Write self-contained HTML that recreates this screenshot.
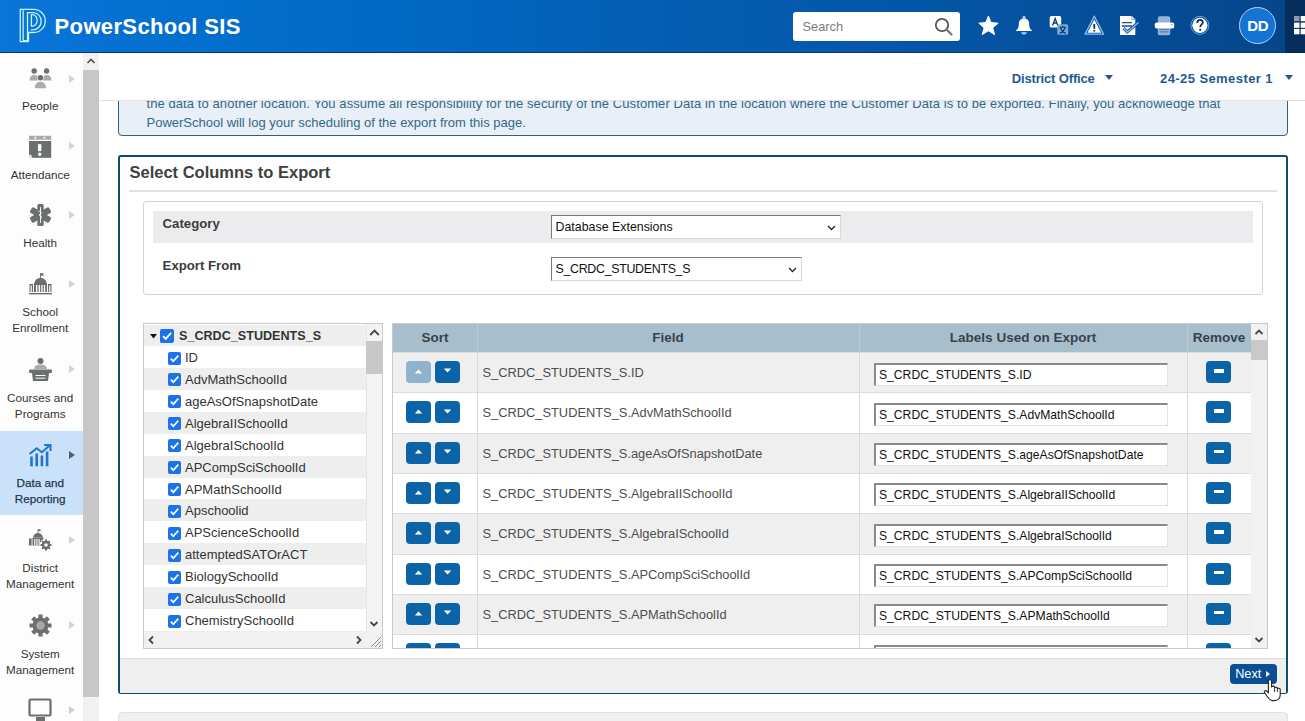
<!DOCTYPE html>
<html><head><meta charset="utf-8">
<style>
*{box-sizing:border-box;margin:0;padding:0}
html,body{width:1305px;height:721px;overflow:hidden;background:#fff;font-family:"Liberation Sans",sans-serif;color:#333}
.abs{position:absolute}
#hdr{left:0;top:0;width:1305px;height:53px;background:linear-gradient(90deg,#0a74d9 0%,#026cc8 22%,#0069c3 30%,#045db2 52%,#0553a2 76%,#054b93 90%,#05468b 98.5%);border-bottom:1px solid #053a75}
#apps{left:1285px;top:0;width:20px;height:53px;background:#062e5c;border-bottom:1px solid #04254a}
#title{left:54.6px;top:13.8px;font-size:22px;font-weight:bold;color:#fff;letter-spacing:0.35px}
#search{left:793px;top:11.5px;width:167px;height:29.5px;background:#fff;border-radius:3px}
#search span{position:absolute;left:9.5px;top:7.8px;font-size:12.8px;color:#7a7a7a}
#side{left:0;top:53px;width:83px;height:668px;background:#fdfdfd}
#sbtrack{left:83px;top:53px;width:16px;height:668px;background:#f1f1f1}
#sbthumb{left:83px;top:70px;width:16px;height:627px;background:#c7c7c7}
.item{position:absolute;left:-1.3px;width:83px;text-align:center;font-size:11.7px;color:#333;line-height:16.3px}
.arr{position:absolute;left:69px;width:0;height:0;border-top:4px solid transparent;border-bottom:4px solid transparent;border-left:6px solid #d0d0d0}
#sub{left:99px;top:53px;width:1206px;height:48px;background:#fff;border-bottom:1px solid #e2e2e2;z-index:3}
.dd{position:absolute;font-weight:bold;color:#1d5a94;top:18px;font-size:13px}
.tri{position:absolute;width:0;height:0;border-left:4.7px solid transparent;border-right:4.7px solid transparent;border-top:5.7px solid #1d5a94}
#notice{left:118px;top:60px;width:1170px;height:76px;background:#e8eff7;border:1px solid #35607a;border-radius:4px}
#notice p{position:absolute;left:27.5px;top:33px;font-size:13px;line-height:20px;color:#33688c;width:1120px}
#box{left:118px;top:155px;width:1170px;height:539px;border:2px solid #0f4d6e;border-radius:3px;background:#fff}
#boxtitle{left:129.5px;top:163px;font-size:16.5px;font-weight:bold;color:#404040}
#rule{left:129px;top:190px;width:1148px;height:2px;background:#e2e2e2}
#filt{left:143px;top:201px;width:1120px;height:94px;border:1px solid #d4d4d4;border-radius:3px}
#catrow{left:153px;top:211px;width:1100px;height:32px;background:#ececee}
.lbl{position:absolute;font-size:13.2px;font-weight:bold;color:#3c3c3c}
.sel{position:absolute;height:24px;background:#fff;border:1px solid #a0a0a0;border-top-color:#7a7a7a;border-left-color:#7a7a7a;border-right-color:#d8d8d8;border-bottom-color:#d8d8d8;font-size:12.4px;color:#111}
.sel span{position:absolute;left:3.5px;top:4px}
.sel svg{position:absolute;right:4px;top:9px}
#tree{left:143px;top:323px;width:240px;height:326px;border:1px solid #c9c9c9;background:#fff;overflow:hidden}
.tr{position:absolute;left:0;width:222px;font-size:13px;color:#333;white-space:nowrap}
.tr.g{background:#eeeeee}
.tr span{position:absolute;top:4px}
.cb{position:absolute;width:13px;height:13px;background:#1a73e8;border-radius:2px}
.cb svg{position:absolute;left:0;top:0}
#tbl{left:392px;top:323px;width:876px;height:326px;border:1px solid #c9c9c9;background:#fff;overflow:hidden}
.th{position:absolute;top:0;height:28px;background:#a7bfcd;font-size:13.5px;font-weight:bold;color:#36434e;text-align:center;line-height:28px}
.row{position:absolute;left:0;width:858px;border-top:1px solid #dcdcdc}
.row.g{background:#efefef}
.vl{position:absolute;top:0;width:1px;background:#d8d8d8}
.btn{position:absolute;width:25px;height:22px;border-radius:4px;background:#0b63a8}
.btn.dis{background:#8fb2cd}
.ftxt{position:absolute;left:89.5px;font-size:12.85px;color:#4d4d4d}
.inp{position:absolute;left:481px;width:294px;height:23px;background:#fff;border:1px solid #e2e2e2;border-top:2px solid #8a8a8a;border-left:2px solid #8a8a8a;font-size:12.15px;color:#111}
.inp span{position:absolute;left:3px;top:3px}
#foot{left:120px;top:658px;width:1166px;height:35px;background:#efefef;border-top:1px solid #dcdcdc}
#next{left:1230.2px;top:664px;width:46.4px;height:20.3px;background:#0a4f95;border-radius:4px;color:#fff;font-size:12.7px}
#bottombox{left:118px;top:712px;width:1170px;height:20px;background:#f0f0f0;border:1px solid #e0e0e0;border-radius:4px}

</style></head><body>
<div id="hdr" class="abs"></div><div id="apps" class="abs"></div>
<svg class="abs" style="left:15px;top:5px" width="35" height="42" viewBox="0 0 601 721">
<g fill="none" stroke="#c4f6ff" stroke-width="22">
<path d="M90,75 H320 A200,198 0 0 1 320,472 H232 V628 H90 Z"/>
<path d="M140,92 V612 H215 V130 H310 A140,148 0 0 1 310,426 H270"/>
<path d="M282,165 H300 A80,98 0 0 1 300,361 H282 Z"/>
</g></svg>
<div id="title" class="abs">PowerSchool SIS</div>
<div id="search" class="abs"><span>Search</span>
<svg style="position:absolute;left:141px;top:5.5px" width="20" height="20" viewBox="0 0 20 20"><circle cx="8" cy="8" r="6.2" fill="none" stroke="#555" stroke-width="1.8"/><path d="M12.4 12.4 L17.5 17.5" stroke="#777" stroke-width="2.2" stroke-linecap="round"/></svg></div>
<svg class="abs" style="left:978px;top:15px" width="21" height="21" viewBox="0 0 21 21"><path d="M10.4 1 L13 7.6 L20.2 8.2 L14.7 12.8 L16.6 19.6 L10.4 15.8 L4.2 19.6 L6.1 12.8 L0.8 8.2 L7.8 7.6 Z" fill="#fff" stroke="#fff" stroke-width="1" stroke-linejoin="round"/></svg>
<svg class="abs" style="left:1015px;top:15px" width="18" height="21" viewBox="0 0 18 21"><circle cx="9" cy="2.2" r="1.5" fill="#a9d2f5"/><path d="M9 3.5 C5.2 3.5 3.8 6 3.8 9.5 C3.8 12.5 3 14 0.6 16 L17.4 16 C15 14 14.2 12.5 14.2 9.5 C14.2 6 12.8 3.5 9 3.5 Z" fill="#fff"/><path d="M6.3 17 A2.7 2.7 0 0 0 11.7 17 Z" fill="#8fc0ea"/></svg>
<svg class="abs" style="left:1049px;top:15px" width="21" height="21" viewBox="0 0 21 21"><rect x="0.7" y="1" width="11.5" height="11.5" rx="1.6" fill="#fff"/><path d="M3.5 10.5 L6.2 3.5 L8.8 10.5 M4.5 8 H8" stroke="#0a3c70" stroke-width="1.3" fill="none"/><rect x="8.2" y="9.2" width="11" height="10.6" rx="1.6" fill="#78a8d8"/><path d="M10.5 12.2 H17 M13.7 10.8 V12.2 M11.2 12.5 C12.5 16 14.5 17.5 17 18.5 M16.2 12.5 C15 16 13 17.5 10.6 18.5" stroke="#0a3c70" stroke-width="1.1" fill="none"/></svg>
<svg class="abs" style="left:1084px;top:15px" width="21" height="21" viewBox="0 0 21 21"><path d="M10.3 1.2 L19.6 19.2 L1 19.2 Z" fill="none" stroke="#8ec1ee" stroke-width="1.3" stroke-linejoin="round"/><path d="M10.3 4.5 L17.2 17.8 L3.4 17.8 Z" fill="#fff"/><path d="M10.3 9 V13.8" stroke="#0b2e55" stroke-width="1.8"/><circle cx="10.3" cy="15.8" r="0.95" fill="#0b2e55"/></svg>
<svg class="abs" style="left:1119px;top:15px" width="21" height="21" viewBox="0 0 21 21"><path d="M1 1 H12.8 L16.3 4.5 V20 H1 Z" fill="#fff"/><path d="M12.8 1 V4.5 H16.3" fill="none" stroke="#6aa4dc" stroke-width="0.8"/><path d="M3 7.6 H13 M3 11 H13" stroke="#2a4e78" stroke-width="1.4"/><path d="M4.6 13.2 L8.2 17 L19.5 7.4" fill="none" stroke="#0a4e94" stroke-width="3"/><path d="M4.6 13.2 L8.2 17 L19.5 7.4" fill="none" stroke="#8ebde8" stroke-width="1.3"/></svg>
<svg class="abs" style="left:1154px;top:15px" width="21" height="21" viewBox="0 0 21 21"><rect x="3.8" y="1.3" width="12.4" height="19" rx="1.8" fill="#93b2d6"/><rect x="0.8" y="7.4" width="19.4" height="6.2" rx="1.8" fill="#fff"/><circle cx="17.8" cy="9.6" r="0.6" fill="#3a5c85"/><path d="M5.2 14.4 H14.8 M5.2 16.8 H14.8" stroke="#5a7eaa" stroke-width="1.2"/></svg>
<svg class="abs" style="left:1190px;top:15px" width="21" height="21" viewBox="0 0 21 21"><circle cx="9.9" cy="10.3" r="9" fill="none" stroke="#6fa6de" stroke-width="1"/><circle cx="9.9" cy="10.3" r="7.6" fill="#fff"/><path d="M7.3 8 C7.3 5.8 8.6 4.8 10 4.8 C11.6 4.8 12.8 5.8 12.8 7.4 C12.8 9.4 10.2 9.6 10.2 12.2" fill="none" stroke="#0b2e55" stroke-width="1.8"/><circle cx="10.2" cy="14.8" r="1.1" fill="#0b2e55"/></svg>
<div class="abs" style="left:1239px;top:7px;width:37px;height:37px;border-radius:50%;background:#1474d6;border:1.7px solid #b5d4f2"></div>
<div class="abs" style="left:1239px;top:16.7px;width:37.5px;text-align:center;font-size:15px;font-weight:bold;color:#fff;letter-spacing:-0.3px">DD</div>
<svg class="abs" style="left:1294.3px;top:16.2px" width="11" height="19" viewBox="0 0 11 19"><g fill="#fff"><rect x="0" y="0" width="5.5" height="5.2" fill="#8e98b8"/><rect x="6.7" y="0" width="5.5" height="5.2"/><rect x="0" y="6.6" width="5.5" height="5.2"/><rect x="6.7" y="6.6" width="5.5" height="5.2"/><rect x="0" y="12.9" width="5.5" height="5.4"/><rect x="6.7" y="12.9" width="5.5" height="5.4"/></g></svg>
<div id="side" class="abs"></div><div id="sbtrack" class="abs"></div><div id="sbthumb" class="abs"></div>
<div class="abs" style="left:83px;top:53px;width:16px;height:17px;background:#f1f1f1"></div>
<svg class="abs" style="left:86px;top:57px" width="10" height="8" viewBox="0 0 10 8"><path d="M1.5 6 L5 2.5 L8.5 6" fill="none" stroke="#505050" stroke-width="1.6"/></svg>
<div class="abs" style="left:0;top:430.5px;width:83px;height:84.5px;background:#cae2f9"></div>
<svg class="abs" style="left:29px;top:68px" width="23" height="23" viewBox="0 0 23 23"><circle cx="5.2" cy="3" r="2.7" fill="#6c6f6f"/><circle cx="17.6" cy="3" r="2.7" fill="#6c6f6f"/><path d="M0.5 12.5 C0.8 8.5 2.5 7 5.2 7 C7 7 8.5 7.8 9.2 9.5 L9.2 12.5 Z M22.5 12.5 C22.2 8.5 20.5 7 17.6 7 C16 7 14.5 7.8 13.8 9.5 L13.8 12.5 Z" fill="#ababab"/><circle cx="11.4" cy="9.8" r="3.2" fill="#fdfdfd"/><circle cx="11.4" cy="9.8" r="2.7" fill="#6c6f6f"/><path d="M5.8 20.3 C6 16 8 13.8 11.4 13.8 C14.8 13.8 16.8 16 17 20.3 Z" fill="#ababab"/></svg>
<div class="item" style="top:98.3px;color:#333">People</div>
<div class="arr" style="top:75px;border-left-color:#d4d4d4"></div>
<svg class="abs" style="left:29px;top:135px" width="23" height="23" viewBox="0 0 23 23"><rect x="0" y="0.8" width="22.2" height="3.9" fill="#a9a9a9"/><circle cx="6.3" cy="2.75" r="1" fill="#fdfdfd"/><circle cx="15.4" cy="2.75" r="1" fill="#fdfdfd"/><rect x="0" y="6" width="22.2" height="16.8" fill="#6c6f6f"/><rect x="9" y="9.2" width="3.4" height="7" fill="#fff"/><circle cx="10.7" cy="19.2" r="1.7" fill="#fff"/><path d="M0.5 19.5 C2 19.5 2.8 20.5 2.8 22.8 L0 22.8Z" fill="#fdfdfd"/></svg>
<div class="item" style="top:166.8px;color:#333">Attendance</div>
<div class="arr" style="top:142px;border-left-color:#d4d4d4"></div>
<svg class="abs" style="left:29px;top:204px" width="23" height="23" viewBox="0 0 23 23"><g fill="#6c6f6f"><rect x="8.3" y="0" width="6.4" height="22" rx="1.5"/><rect x="8.3" y="0" width="6.4" height="22" rx="1.5" transform="rotate(60 11.5 11)"/><rect x="8.3" y="0" width="6.4" height="22" rx="1.5" transform="rotate(-60 11.5 11)"/></g><path d="M11.5 3 V19 M9.5 7 C13 8 13 10 10 11 C13 12 13 14 11 15" stroke="#fdfdfd" stroke-width="0.9" fill="none"/></svg>
<div class="item" style="top:235.4px;color:#333">Health</div>
<div class="arr" style="top:211px;border-left-color:#d4d4d4"></div>
<svg class="abs" style="left:29px;top:273px" width="23" height="23" viewBox="0 0 23 23"><g fill="#6c6f6f"><path d="M11.5 0 V5" stroke="#6c6f6f" stroke-width="0.9"/><path d="M11.8 0.3 H15 L14 1.5 L15 2.8 H11.8Z"/><path d="M5.5 10 C6 6.5 8.5 5 11.5 5 C14.5 5 17 6.5 17.5 10 Z"/><rect x="5" y="10" width="13" height="9"/><rect x="0.5" y="11" width="3.5" height="8"/><rect x="19" y="11" width="3.5" height="8"/><rect x="0" y="20" width="23" height="1.4"/></g><g fill="#fdfdfd"><rect x="7" y="12" width="1.4" height="7"/><rect x="9.6" y="12" width="1.4" height="7"/><rect x="12.2" y="12" width="1.4" height="7"/><rect x="14.8" y="12" width="1.4" height="7"/><rect x="1.6" y="12.5" width="1.2" height="6.5"/><rect x="20.2" y="12.5" width="1.2" height="6.5"/></g></svg>
<div class="item" style="top:304.1px;color:#333">School<br>Enrollment</div>
<div class="arr" style="top:280px;border-left-color:#d4d4d4"></div>
<svg class="abs" style="left:29px;top:358px" width="23" height="23" viewBox="0 0 23 23"><circle cx="11.5" cy="3" r="3" fill="#6c6f6f"/><path d="M5 11 C5.5 7.5 8 6.5 11.5 6.5 C15 6.5 17.5 7.5 18 11 Z" fill="#ababab"/><rect x="0" y="11.5" width="23" height="3.4" rx="0.8" fill="#6c6f6f"/><path d="M3 14.9 H20 L19 23 H4 Z" fill="#6c6f6f"/><path d="M6.5 17.5 H16.5 M6.5 20.2 H16.5" stroke="#fdfdfd" stroke-width="1"/></svg>
<div class="item" style="top:389.6px;color:#333">Courses and<br>Programs</div>
<div class="arr" style="top:365px;border-left-color:#d4d4d4"></div>
<svg class="abs" style="left:29px;top:444px" width="23" height="23" viewBox="0 0 23 23"><g fill="#1f75cc"><rect x="1.2" y="12.5" width="2.6" height="9.8"/><rect x="6.4" y="9.5" width="2.6" height="12.8"/><rect x="11.6" y="11.5" width="2.6" height="10.8"/><rect x="16.8" y="7.5" width="2.6" height="14.8"/></g><path d="M0.6 10 L7.7 4.2 L12.9 8.2 L20.6 1.6" fill="none" stroke="#1f75cc" stroke-width="2"/><path d="M15.2 0.9 H21.5 V7" fill="none" stroke="#1f75cc" stroke-width="2"/></svg>
<div class="item" style="top:474.6px;color:#22384f;-webkit-text-stroke:0.25px #22384f">Data and<br>Reporting</div>
<div class="arr" style="top:451px;border-left-color:#4f5f70"></div>
<svg class="abs" style="left:29px;top:529px" width="23" height="23" viewBox="0 0 23 23"><g fill="#6c6f6f"><path d="M9 0 V4" stroke="#6c6f6f" stroke-width="0.8"/><path d="M9.2 0.2 H12 L11.2 1.2 L12 2.3 H9.2Z"/><path d="M4 8.5 C4.5 5.5 6.5 4 9 4 C11.5 4 13.5 5.5 14 8.5 Z"/><rect x="3.5" y="8.5" width="11" height="8"/><rect x="0" y="9.5" width="2.6" height="7"/></g><g fill="#fdfdfd"><rect x="5.2" y="10" width="1.1" height="6.5"/><rect x="7.4" y="10" width="1.1" height="6.5"/><rect x="9.6" y="10" width="1.1" height="6.5"/></g><circle cx="17" cy="16" r="6.2" fill="#fdfdfd"/><g fill="#6c6f6f"><circle cx="17" cy="16" r="4.2"/><g stroke="#6c6f6f" stroke-width="2"><path d="M17 10.5 V21.5 M11.5 16 H22.5 M13.1 12.1 L20.9 19.9 M20.9 12.1 L13.1 19.9"/></g></g><circle cx="17" cy="16" r="1.8" fill="#fdfdfd"/></svg>
<div class="item" style="top:560px;color:#333">District<br>Management</div>
<div class="arr" style="top:536px;border-left-color:#d4d4d4"></div>
<svg class="abs" style="left:29px;top:614px" width="23" height="23" viewBox="0 0 23 23"><g fill="#6c6f6f" stroke="#6c6f6f"><circle cx="11.5" cy="11.5" r="8" stroke="none"/><path d="M11.5 0.5 V22.5 M0.5 11.5 H22.5 M3.7 3.7 L19.3 19.3 M19.3 3.7 L3.7 19.3" stroke-width="4.2"/></g><circle cx="11.5" cy="11.5" r="4.2" fill="#a9a9a9"/></svg>
<div class="item" style="top:646.2px;color:#333">System<br>Management</div>
<div class="arr" style="top:621px;border-left-color:#d4d4d4"></div>
<svg class="abs" style="left:28px;top:698px" width="25" height="23" viewBox="0 0 25 23"><rect x="1.5" y="1.5" width="21" height="16" rx="1" fill="none" stroke="#6c6f6f" stroke-width="2.2"/><rect x="8" y="19" width="9" height="4" fill="#6c6f6f"/></svg>
<div class="arr" style="top:706px"></div>
<div id="sub" class="abs">
  <div class="dd" style="left:912.7px;letter-spacing:-0.15px">District Office</div>
  <div class="tri" style="left:1006.4px;top:22.2px"></div>
  <div class="dd" style="left:1061px;letter-spacing:0.42px">24-25 Semester 1</div>
  <div class="tri" style="left:1185.6px;top:22.2px"></div>
</div>
<div id="notice" class="abs"><p style="letter-spacing:0.08px;white-space:nowrap">the data to another location. You assume all responsibility for the security of the Customer Data in the location where the Customer Data is to be exported. Finally, you acknowledge that</p><p style="top:52px">PowerSchool will log your scheduling of the export from this page.</p></div>
<div id="box" class="abs"></div><div id="boxtitle" class="abs">Select Columns to Export</div><div id="rule" class="abs"></div>
<div id="filt" class="abs"></div><div id="catrow" class="abs"></div>
<div class="lbl abs" style="left:162.6px;top:216px">Category</div><div class="lbl abs" style="left:162.6px;top:258px">Export From</div>
<div class="sel" style="left:551px;top:215px;width:290px"><span>Database Extensions</span><svg width="9" height="6" viewBox="0 0 9 6"><path d="M1 1 L4.5 4.5 L8 1" fill="none" stroke="#222" stroke-width="1.3"/></svg></div>
<div class="sel" style="left:551px;top:257px;width:251px"><span style="letter-spacing:-0.3px">S_CRDC_STUDENTS_S</span><svg width="9" height="6" viewBox="0 0 9 6"><path d="M1 1 L4.5 4.5 L8 1" fill="none" stroke="#222" stroke-width="1.3"/></svg></div>
<div id="tree" class="abs"><div class="tr g" style="top:1px;height:20.5px"><svg style="position:absolute;left:6px;top:9px" width="7" height="5" viewBox="0 0 7 5"><path d="M0 0 H7 L3.5 4.5Z" fill="#111"/></svg><div class="cb" style="left:16px;top:3.8px;width:14px;height:14px"><svg width="14" height="14" viewBox="0 0 13 13"><path d="M2.8 6.6 L5.3 9.2 L10.3 3.6" fill="none" stroke="#fff" stroke-width="1.7"/></svg></div><span style="left:35px;top:3.5px;font-weight:bold;font-size:12.6px;color:#333">S_CRDC_STUDENTS_S</span></div><div class="tr" style="top:22.00px;height:21.92px"><div class="cb" style="left:24px;top:5.5px"><svg width="13" height="13" viewBox="0 0 13 13"><path d="M2.8 6.6 L5.3 9.2 L10.3 3.6" fill="none" stroke="#fff" stroke-width="1.7"/></svg></div><span style="left:41px">ID</span></div><div class="tr g" style="top:43.92px;height:21.92px"><div class="cb" style="left:24px;top:5.5px"><svg width="13" height="13" viewBox="0 0 13 13"><path d="M2.8 6.6 L5.3 9.2 L10.3 3.6" fill="none" stroke="#fff" stroke-width="1.7"/></svg></div><span style="left:41px">AdvMathSchoolId</span></div><div class="tr" style="top:65.84px;height:21.92px"><div class="cb" style="left:24px;top:5.5px"><svg width="13" height="13" viewBox="0 0 13 13"><path d="M2.8 6.6 L5.3 9.2 L10.3 3.6" fill="none" stroke="#fff" stroke-width="1.7"/></svg></div><span style="left:41px">ageAsOfSnapshotDate</span></div><div class="tr g" style="top:87.76px;height:21.92px"><div class="cb" style="left:24px;top:5.5px"><svg width="13" height="13" viewBox="0 0 13 13"><path d="M2.8 6.6 L5.3 9.2 L10.3 3.6" fill="none" stroke="#fff" stroke-width="1.7"/></svg></div><span style="left:41px">AlgebraIISchoolId</span></div><div class="tr" style="top:109.68px;height:21.92px"><div class="cb" style="left:24px;top:5.5px"><svg width="13" height="13" viewBox="0 0 13 13"><path d="M2.8 6.6 L5.3 9.2 L10.3 3.6" fill="none" stroke="#fff" stroke-width="1.7"/></svg></div><span style="left:41px">AlgebraISchoolId</span></div><div class="tr g" style="top:131.60px;height:21.92px"><div class="cb" style="left:24px;top:5.5px"><svg width="13" height="13" viewBox="0 0 13 13"><path d="M2.8 6.6 L5.3 9.2 L10.3 3.6" fill="none" stroke="#fff" stroke-width="1.7"/></svg></div><span style="left:41px">APCompSciSchoolId</span></div><div class="tr" style="top:153.52px;height:21.92px"><div class="cb" style="left:24px;top:5.5px"><svg width="13" height="13" viewBox="0 0 13 13"><path d="M2.8 6.6 L5.3 9.2 L10.3 3.6" fill="none" stroke="#fff" stroke-width="1.7"/></svg></div><span style="left:41px">APMathSchoolId</span></div><div class="tr g" style="top:175.44px;height:21.92px"><div class="cb" style="left:24px;top:5.5px"><svg width="13" height="13" viewBox="0 0 13 13"><path d="M2.8 6.6 L5.3 9.2 L10.3 3.6" fill="none" stroke="#fff" stroke-width="1.7"/></svg></div><span style="left:41px">Apschoolid</span></div><div class="tr" style="top:197.36px;height:21.92px"><div class="cb" style="left:24px;top:5.5px"><svg width="13" height="13" viewBox="0 0 13 13"><path d="M2.8 6.6 L5.3 9.2 L10.3 3.6" fill="none" stroke="#fff" stroke-width="1.7"/></svg></div><span style="left:41px">APScienceSchoolId</span></div><div class="tr g" style="top:219.28px;height:21.92px"><div class="cb" style="left:24px;top:5.5px"><svg width="13" height="13" viewBox="0 0 13 13"><path d="M2.8 6.6 L5.3 9.2 L10.3 3.6" fill="none" stroke="#fff" stroke-width="1.7"/></svg></div><span style="left:41px">attemptedSATOrACT</span></div><div class="tr" style="top:241.20px;height:21.92px"><div class="cb" style="left:24px;top:5.5px"><svg width="13" height="13" viewBox="0 0 13 13"><path d="M2.8 6.6 L5.3 9.2 L10.3 3.6" fill="none" stroke="#fff" stroke-width="1.7"/></svg></div><span style="left:41px">BiologySchoolId</span></div><div class="tr g" style="top:263.12px;height:21.92px"><div class="cb" style="left:24px;top:5.5px"><svg width="13" height="13" viewBox="0 0 13 13"><path d="M2.8 6.6 L5.3 9.2 L10.3 3.6" fill="none" stroke="#fff" stroke-width="1.7"/></svg></div><span style="left:41px">CalculusSchoolId</span></div><div class="tr" style="top:285.04px;height:21.92px"><div class="cb" style="left:24px;top:5.5px"><svg width="13" height="13" viewBox="0 0 13 13"><path d="M2.8 6.6 L5.3 9.2 L10.3 3.6" fill="none" stroke="#fff" stroke-width="1.7"/></svg></div><span style="left:41px">ChemistrySchoolId</span></div><div class="tr g" style="top:306.96px;height:21.92px"><div class="cb" style="left:24px;top:5.5px"><svg width="13" height="13" viewBox="0 0 13 13"><path d="M2.8 6.6 L5.3 9.2 L10.3 3.6" fill="none" stroke="#fff" stroke-width="1.7"/></svg></div><span style="left:41px">ChemSchoolId</span></div><div style="position:absolute;left:222px;top:0;width:17px;height:308px;background:#f3f3f3;border-left:1px solid #e4e4e4"></div><div style="position:absolute;left:222px;top:16.5px;width:17px;height:33.5px;background:#c8c8c8"></div><svg style="position:absolute;left:225px;top:3.5px" width="11" height="9" viewBox="0 0 11 9"><path d="M1.2 7 L5.5 2.6 L9.8 7" fill="none" stroke="#454545" stroke-width="1.8"/></svg><svg style="position:absolute;left:225px;top:296px" width="10" height="8" viewBox="0 0 10 8"><path d="M1.5 2 L5 5.5 L8.5 2" fill="none" stroke="#454545" stroke-width="1.8"/></svg><div style="position:absolute;left:0;top:308px;width:239px;height:17px;background:#f1f1f1"></div><svg style="position:absolute;left:3px;top:311px" width="8" height="10" viewBox="0 0 8 10"><path d="M6 1.5 L2.5 5 L6 8.5" fill="none" stroke="#454545" stroke-width="1.8"/></svg><svg style="position:absolute;left:211px;top:311px" width="8" height="10" viewBox="0 0 8 10"><path d="M2 1.5 L5.5 5 L2 8.5" fill="none" stroke="#454545" stroke-width="1.8"/></svg><svg style="position:absolute;left:225px;top:311px" width="13" height="13" viewBox="0 0 13 13"><path d="M12 2 L2 12 M12 6 L6 12 M12 10 L10 12" stroke="#888" stroke-width="1"/></svg></div>
<div id="tbl" class="abs"><div class="th" style="left:0;width:84px">Sort</div><div class="th" style="left:84px;width:382px">Field</div><div class="th" style="left:466px;width:328px">Labels Used on Export</div><div class="th" style="left:794px;width:64px">Remove</div><div class="vl" style="left:84px;height:28px;background:#b8ccd8"></div><div class="vl" style="left:466px;height:28px;background:#b8ccd8"></div><div class="vl" style="left:794px;height:28px;background:#b8ccd8"></div><div class="row g" style="top:28.00px;height:40.33px"><div class="btn dis" style="left:13px;top:8px"><svg style="position:absolute;left:8px;top:7.6px" width="9" height="5" viewBox="0 0 9 5"><path d="M0.8 4.4 L4.5 0.4 L8.2 4.4Z" fill="#fff"/></svg></div><div class="btn" style="left:42.4px;top:8px"><svg style="position:absolute;left:8px;top:7.2px" width="9" height="5" viewBox="0 0 9 5"><path d="M0.8 0.6 L4.5 4.6 L8.2 0.6Z" fill="#fff"/></svg></div><div class="ftxt" style="top:12px">S_CRDC_STUDENTS_S.ID</div><div class="inp" style="top:9.5px"><span>S_CRDC_STUDENTS_S.ID</span></div><div class="btn" style="left:813px;top:8px"><div style="position:absolute;left:8px;top:8px;width:9.5px;height:3.5px;background:#fff"></div></div></div><div class="row" style="top:68.33px;height:40.33px"><div class="btn" style="left:13px;top:8px"><svg style="position:absolute;left:8px;top:7.6px" width="9" height="5" viewBox="0 0 9 5"><path d="M0.8 4.4 L4.5 0.4 L8.2 4.4Z" fill="#fff"/></svg></div><div class="btn" style="left:42.4px;top:8px"><svg style="position:absolute;left:8px;top:7.2px" width="9" height="5" viewBox="0 0 9 5"><path d="M0.8 0.6 L4.5 4.6 L8.2 0.6Z" fill="#fff"/></svg></div><div class="ftxt" style="top:12px">S_CRDC_STUDENTS_S.AdvMathSchoolId</div><div class="inp" style="top:9.5px"><span>S_CRDC_STUDENTS_S.AdvMathSchoolId</span></div><div class="btn" style="left:813px;top:8px"><div style="position:absolute;left:8px;top:8px;width:9.5px;height:3.5px;background:#fff"></div></div></div><div class="row g" style="top:108.66px;height:40.33px"><div class="btn" style="left:13px;top:8px"><svg style="position:absolute;left:8px;top:7.6px" width="9" height="5" viewBox="0 0 9 5"><path d="M0.8 4.4 L4.5 0.4 L8.2 4.4Z" fill="#fff"/></svg></div><div class="btn" style="left:42.4px;top:8px"><svg style="position:absolute;left:8px;top:7.2px" width="9" height="5" viewBox="0 0 9 5"><path d="M0.8 0.6 L4.5 4.6 L8.2 0.6Z" fill="#fff"/></svg></div><div class="ftxt" style="top:12px">S_CRDC_STUDENTS_S.ageAsOfSnapshotDate</div><div class="inp" style="top:9.5px"><span>S_CRDC_STUDENTS_S.ageAsOfSnapshotDate</span></div><div class="btn" style="left:813px;top:8px"><div style="position:absolute;left:8px;top:8px;width:9.5px;height:3.5px;background:#fff"></div></div></div><div class="row" style="top:148.99px;height:40.33px"><div class="btn" style="left:13px;top:8px"><svg style="position:absolute;left:8px;top:7.6px" width="9" height="5" viewBox="0 0 9 5"><path d="M0.8 4.4 L4.5 0.4 L8.2 4.4Z" fill="#fff"/></svg></div><div class="btn" style="left:42.4px;top:8px"><svg style="position:absolute;left:8px;top:7.2px" width="9" height="5" viewBox="0 0 9 5"><path d="M0.8 0.6 L4.5 4.6 L8.2 0.6Z" fill="#fff"/></svg></div><div class="ftxt" style="top:12px">S_CRDC_STUDENTS_S.AlgebraIISchoolId</div><div class="inp" style="top:9.5px"><span>S_CRDC_STUDENTS_S.AlgebraIISchoolId</span></div><div class="btn" style="left:813px;top:8px"><div style="position:absolute;left:8px;top:8px;width:9.5px;height:3.5px;background:#fff"></div></div></div><div class="row g" style="top:189.32px;height:40.33px"><div class="btn" style="left:13px;top:8px"><svg style="position:absolute;left:8px;top:7.6px" width="9" height="5" viewBox="0 0 9 5"><path d="M0.8 4.4 L4.5 0.4 L8.2 4.4Z" fill="#fff"/></svg></div><div class="btn" style="left:42.4px;top:8px"><svg style="position:absolute;left:8px;top:7.2px" width="9" height="5" viewBox="0 0 9 5"><path d="M0.8 0.6 L4.5 4.6 L8.2 0.6Z" fill="#fff"/></svg></div><div class="ftxt" style="top:12px">S_CRDC_STUDENTS_S.AlgebraISchoolId</div><div class="inp" style="top:9.5px"><span>S_CRDC_STUDENTS_S.AlgebraISchoolId</span></div><div class="btn" style="left:813px;top:8px"><div style="position:absolute;left:8px;top:8px;width:9.5px;height:3.5px;background:#fff"></div></div></div><div class="row" style="top:229.65px;height:40.33px"><div class="btn" style="left:13px;top:8px"><svg style="position:absolute;left:8px;top:7.6px" width="9" height="5" viewBox="0 0 9 5"><path d="M0.8 4.4 L4.5 0.4 L8.2 4.4Z" fill="#fff"/></svg></div><div class="btn" style="left:42.4px;top:8px"><svg style="position:absolute;left:8px;top:7.2px" width="9" height="5" viewBox="0 0 9 5"><path d="M0.8 0.6 L4.5 4.6 L8.2 0.6Z" fill="#fff"/></svg></div><div class="ftxt" style="top:12px">S_CRDC_STUDENTS_S.APCompSciSchoolId</div><div class="inp" style="top:9.5px"><span>S_CRDC_STUDENTS_S.APCompSciSchoolId</span></div><div class="btn" style="left:813px;top:8px"><div style="position:absolute;left:8px;top:8px;width:9.5px;height:3.5px;background:#fff"></div></div></div><div class="row g" style="top:269.98px;height:40.33px"><div class="btn" style="left:13px;top:8px"><svg style="position:absolute;left:8px;top:7.6px" width="9" height="5" viewBox="0 0 9 5"><path d="M0.8 4.4 L4.5 0.4 L8.2 4.4Z" fill="#fff"/></svg></div><div class="btn" style="left:42.4px;top:8px"><svg style="position:absolute;left:8px;top:7.2px" width="9" height="5" viewBox="0 0 9 5"><path d="M0.8 0.6 L4.5 4.6 L8.2 0.6Z" fill="#fff"/></svg></div><div class="ftxt" style="top:12px">S_CRDC_STUDENTS_S.APMathSchoolId</div><div class="inp" style="top:9.5px"><span>S_CRDC_STUDENTS_S.APMathSchoolId</span></div><div class="btn" style="left:813px;top:8px"><div style="position:absolute;left:8px;top:8px;width:9.5px;height:3.5px;background:#fff"></div></div></div><div class="row" style="top:310.31px;height:40.33px"><div class="btn" style="left:13px;top:8px"><svg style="position:absolute;left:8px;top:7.6px" width="9" height="5" viewBox="0 0 9 5"><path d="M0.8 4.4 L4.5 0.4 L8.2 4.4Z" fill="#fff"/></svg></div><div class="btn" style="left:42.4px;top:8px"><svg style="position:absolute;left:8px;top:7.2px" width="9" height="5" viewBox="0 0 9 5"><path d="M0.8 0.6 L4.5 4.6 L8.2 0.6Z" fill="#fff"/></svg></div><div class="ftxt" style="top:12px">S_CRDC_STUDENTS_S.APschoolid</div><div class="inp" style="top:9.5px"><span>S_CRDC_STUDENTS_S.APschoolid</span></div><div class="btn" style="left:813px;top:8px"><div style="position:absolute;left:8px;top:8px;width:9.5px;height:3.5px;background:#fff"></div></div></div><div class="vl" style="left:84px;top:28px;height:300px"></div><div class="vl" style="left:466px;top:28px;height:300px"></div><div class="vl" style="left:794px;top:28px;height:300px"></div><div style="position:absolute;left:858px;top:0;width:17px;height:325px;background:#f1f1f1"></div><div style="position:absolute;left:858px;top:16px;width:17px;height:20px;background:#c9c9c9"></div><svg style="position:absolute;left:861px;top:4px" width="10" height="8" viewBox="0 0 10 8"><path d="M1.5 6 L5 2.5 L8.5 6" fill="none" stroke="#454545" stroke-width="1.8"/></svg><svg style="position:absolute;left:861px;top:312px" width="10" height="8" viewBox="0 0 10 8"><path d="M1.5 2 L5 5.5 L8.5 2" fill="none" stroke="#454545" stroke-width="1.8"/></svg></div>
<div id="foot" class="abs"></div>
<div id="next" class="abs"><span style="position:absolute;left:5px;top:3.2px">Next</span><svg style="position:absolute;left:35.6px;top:7px" width="5" height="7" viewBox="0 0 5 7"><path d="M0 0 L4 3 L0 6Z" fill="#fff"/></svg></div>
<svg class="abs" style="left:1262px;top:678px" width="21" height="25" viewBox="0 0 21 25"><path d="M6.4 2.8 C6.4 1.3 9.6 1.3 9.6 2.8 V9 C9.8 7.8 12.4 7.8 12.6 9 V10 C12.8 8.9 15.2 8.9 15.4 10 V11 C15.6 10 18 10 18.2 11.2 V17 C18.2 20.5 15.5 22.6 12 22.6 H10.5 C8.5 22.6 7.5 21.5 6 19.5 L2.6 14.8 C1.8 13.6 3.4 12 4.6 13 L6.4 14.8 Z" fill="#fff" stroke="#222" stroke-width="1.1" stroke-linejoin="round"/><path d="M12.6 10 V14 M15.4 11 V14" stroke="#222" stroke-width="0.9"/></svg>
<div id="bottombox" class="abs"></div>
</body></html>
